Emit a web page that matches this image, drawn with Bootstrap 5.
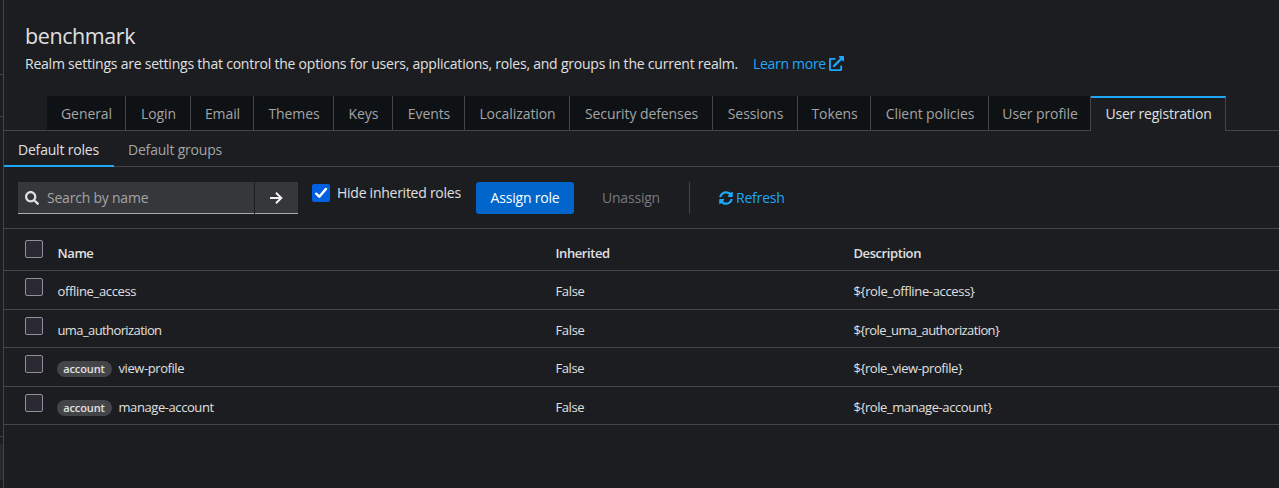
<!DOCTYPE html>
<html lang="en" data-bs-theme="dark">
<head>
<meta charset="utf-8">
<meta name="viewport" content="width=device-width, initial-scale=1">
<title>Realm settings</title>
<link href="https://cdn.jsdelivr.net/npm/bootstrap@5.3.0/dist/css/bootstrap.min.css" rel="stylesheet">
<style>
  body { background:#1b1d21; color:#e0e0e0; font-family:"Open Sans","Noto Sans",sans-serif; font-size:14px; line-height:20px; height:488px; overflow:hidden; }
  .side { width:4px; border-right:1px solid #444548; }
  .side-rule { height:1px; background:#444548; }
  .side-rule:nth-child(1) { margin-top:74px; }
  .side-rule:nth-child(2) { margin-top:41px; }
  .side-rule:nth-child(3) { margin-top:319px; }
  .side-block { height:36px; margin-top:7px; background:#26282c; }
  .accent { color:#1fa7f8; text-decoration:none; }
  .page-head { height:96px; padding:23px 21px 0; }
  .page-head h1 { font-size:21.5px; line-height:26px; font-weight:400; margin:0 0 5px; letter-spacing:-.42px; color:#e0e0e0; }
  .intro { width:728px; letter-spacing:-.222px; white-space:nowrap; }
  .learn { letter-spacing:-.3px; }
  .learn svg { margin:2px 0 0 3px; }
  .main-tabs { height:35px; padding-left:43px; border-bottom:1px solid #444548; }
  .main-tabs .nav-link { height:34px; padding:8px 0 0 1px; border:0; border-right:1px solid #444548; border-radius:0; background:#0f1214; color:#a3a4a6; text-align:center; letter-spacing:-.08px; white-space:nowrap; }
  .main-tabs .nav-link.active { height:35px; background:#1b1d21; color:#e0e0e0; border-top:2px solid #1fa7f8; padding-top:6px; letter-spacing:-.2px; }
  .w79{width:79px}.w65{width:65px}.w63{width:63px}.w80{width:80px}.w59{width:59px}.w72{width:72px}.w105{width:105px}.w143{width:143px}.w85{width:85px}.w73{width:73px}.w118{width:118px}.w102{width:102px}.w135{width:135px}
  .sub-tabs { height:36px; border-bottom:1px solid #444548; }
  .sub-tabs .nav-link { height:36px; padding:9px 0 0 14px; border-radius:0; color:#a3a4a6; width:122px; white-space:nowrap; letter-spacing:-.2px; }
  .sub-tabs .nav-link.active { width:110px; color:#e0e0e0; border-bottom:2px solid #1fa7f8; }
  .tools { height:62px; padding:15px 14px 0; border-bottom:1px solid #444548; }
  .find { width:236px; height:32px; background:#36373a; border-bottom:1px solid #aaabac; color:#a3a4a6; padding:0 7px; letter-spacing:-.22px; }
  .go { width:43px; height:32px; margin-left:1px; background:#36373a; border:0; border-bottom:1px solid #aaabac; border-radius:0; padding:0 2px 0 0; }
  .hide { margin:2px 0 0 14px; width:150px; }
  .hide span { margin:-1px 0 0 7px; letter-spacing:-.26px; white-space:nowrap; }
  .box { width:18px; height:18px; margin:0; background-color:#2b2a33; border:1px solid #8f8f9d; border-radius:2px !important; display:block; float:none; }
  .hide .box:checked { background-color:#0060df; border-color:#0060df; background-size:16px 16px; background-image:url("data:image/svg+xml,%3csvg xmlns='http://www.w3.org/2000/svg' viewBox='0 0 16 16'%3e%3cpath d='M3.200 8.700 6.300 11.700 13 3.900' fill='none' stroke='%23fff' stroke-width='2.400' stroke-linecap='round' stroke-linejoin='round'/%3e%3c/svg%3e"); }
  .assign { width:98px; height:32px; margin-left:14px; padding:0 0 2px; background:#06c; border:0; border-radius:3px; color:#fff; font-size:14px; letter-spacing:-.2px; }
  .unassign { width:86px; margin:6px 0 0 14px; text-align:center; color:#77797c; letter-spacing:-.2px; }
  .split { width:1px; height:32px; background:#444548; margin-left:15px; }
  .refresh { margin:6px 0 0 29px; letter-spacing:-.2px; gap:3px; }
  .roles { table-layout:fixed; width:1275px; margin:0; font-size:13px; letter-spacing:-.34px; border-collapse:separate; border-spacing:0; }
  .roles th, .roles td { background:none; color:#e0e0e0; padding:0; border:0; border-bottom:1px solid #444548; height:39px; vertical-align:top; line-height:18px; padding-top:11px; }
  .roles .short td { height:38px; }
  .roles thead th { height:42px; padding-top:15px; font-weight:600; letter-spacing:-.42px; }
  .roles td:first-child { padding:7px 0 0 21px !important; }
  .roles thead th:first-child { padding:11px 0 0 21px; }
  .roles .dense td { letter-spacing:-.6px; }
  .roles .dense td:nth-child(3) { letter-spacing:-.34px; }
  .roles .snug td { letter-spacing:-.42px; }
  .check-col { width:53.500px; } .name-col { width:498px; } .flag-col { width:298px; }
  .pill { display:inline-block; vertical-align:top; width:55px; height:16px; margin:2px 7px 0 -1px; padding:0; line-height:15px; font-size:11px; font-weight:600; letter-spacing:-.1px; color:#e0e0e0; background:#444548; border-radius:8px; text-align:center; }
</style>
</head>
<body class="d-flex">
  <aside class="side flex-shrink-0 d-flex flex-column">
    <div class="side-rule"></div>
    <div class="side-rule"></div>
    <div class="side-rule"></div>
    <div class="side-block"></div>
  </aside>
  <main class="flex-grow-1">
    <header class="page-head">
      <h1>benchmark</h1>
      <div class="d-flex"><span class="intro">Realm settings are settings that control the options for users, applications, roles, and groups in the current realm.</span>
        <a class="accent d-flex learn" href="#"><span>Learn more</span><svg width="15" height="15" viewBox="0 0 512 512" fill="currentColor"><path d="M432 320h-32a16 16 0 0 0-16 16v112H64V128h144a16 16 0 0 0 16-16V80a16 16 0 0 0-16-16H48a48 48 0 0 0-48 48v352a48 48 0 0 0 48 48h352a48 48 0 0 0 48-48V336a16 16 0 0 0-16-16zM488 0H360c-21.370 0-32.050 25.910-17 41l35.730 35.730L135 320.370a24 24 0 0 0 0 34L157.670 377a24 24 0 0 0 34 0l243.610-243.680L471 169c15 15 41 4.500 41-17V24a24 24 0 0 0-24-24z"/></svg></a></div>
    </header>
    <nav class="main-tabs nav flex-nowrap">
      <a class="nav-link w79" href="#">General</a><a class="nav-link w65" href="#">Login</a><a class="nav-link w63" href="#">Email</a><a class="nav-link w80" href="#">Themes</a><a class="nav-link w59" href="#">Keys</a><a class="nav-link w72" href="#">Events</a><a class="nav-link w105" href="#">Localization</a><a class="nav-link w143" href="#">Security defenses</a><a class="nav-link w85" href="#">Sessions</a><a class="nav-link w73" href="#">Tokens</a><a class="nav-link w118" href="#">Client policies</a><a class="nav-link w102" href="#">User profile</a><a class="nav-link w135 active" href="#">User registration</a>
    </nav>
    <nav class="sub-tabs nav"><a class="nav-link active" href="#">Default roles</a><a class="nav-link" href="#">Default groups</a></nav>
    <section class="tools d-flex align-items-start">
      <div class="find d-flex align-items-center"><svg class="me-2" width="14" height="14" viewBox="0 0 512 512" fill="#e0e0e0"><path d="M505 442.700L405.300 343c-4.500-4.500-10.600-7-17-7H372c27.600-35.300 44-79.700 44-128C416 93.100 322.900 0 208 0S0 93.100 0 208s93.100 208 208 208c48.300 0 92.700-16.400 128-44v16.300c0 6.400 2.500 12.500 7 17l99.700 99.700c9.400 9.400 24.600 9.400 33.900 0l28.300-28.300c9.400-9.400 9.400-24.600.1-34zM208 336c-70.700 0-128-57.200-128-128 0-70.700 57.200-128 128-128 70.700 0 128 57.200 128 128 0 70.700-57.200 128-128 128z"/></svg><span>Search by name</span></div>
      <button class="go btn d-flex align-items-center justify-content-center" aria-label="Search"><svg width="14" height="14" viewBox="0 0 14 14" fill="none" stroke="#f0f0f0" stroke-width="2"><path d="M1 7h11M7 1.700 12.300 7 7 12.300"/></svg></button>
      <label class="hide d-flex"><input class="form-check-input box flex-shrink-0" type="checkbox" checked><span>Hide inherited roles</span></label>
      <button class="assign btn">Assign role</button>
      <span class="unassign">Unassign</span>
      <span class="split"></span>
      <a class="accent d-flex align-items-center refresh" href="#"><svg width="14" height="14" viewBox="0 0 512 512" fill="currentColor"><path d="M370.720 133.280C339.458 104.008 298.888 87.962 255.848 88c-77.458.068-144.328 53.178-162.791 126.850-1.344 5.363-6.122 9.150-11.651 9.150H24.103c-7.498 0-13.194-6.807-11.807-14.176C33.933 94.924 134.813 8 256 8c66.448 0 126.791 26.136 171.315 68.685L463.030 40.970C478.149 25.851 504 36.559 504 57.941V192c0 13.255-10.745 24-24 24H345.941c-21.382 0-32.090-25.851-16.971-40.971l41.750-41.749zM32 296h134.059c21.382 0 32.090 25.851 16.971 40.971l-41.750 41.750c31.262 29.273 71.835 45.319 114.876 45.280 77.418-.070 144.315-53.144 162.787-126.849 1.344-5.363 6.122-9.150 11.651-9.150h57.304c7.498 0 13.194 6.807 11.807 14.176C478.067 417.076 377.187 504 256 504c-66.448 0-126.791-26.136-171.315-68.685L48.970 471.030C33.851 486.149 8 475.441 8 454.059V320c0-13.255 10.745-24 24-24z"/></svg><span>Refresh</span></a>
    </section>
    <table class="roles table">
      <colgroup><col class="check-col"><col class="name-col"><col class="flag-col"><col></colgroup>
      <thead><tr><th><input class="form-check-input box" type="checkbox"></th><th>Name</th><th>Inherited</th><th>Description</th></tr></thead>
      <tbody>
        <tr><td><input class="form-check-input box" type="checkbox"></td><td>offline_access</td><td>False</td><td>${role_offline-access}</td></tr>
        <tr class="short dense"><td><input class="form-check-input box" type="checkbox"></td><td>uma_authorization</td><td>False</td><td>${role_uma_authorization}</td></tr>
        <tr class="snug"><td><input class="form-check-input box" type="checkbox"></td><td><span class="pill">account</span>view-profile</td><td>False</td><td>${role_view-profile}</td></tr>
        <tr class="short snug"><td><input class="form-check-input box" type="checkbox"></td><td><span class="pill">account</span>manage-account</td><td>False</td><td>${role_manage-account}</td></tr>
      </tbody>
    </table>
  </main>
<script src="https://cdn.jsdelivr.net/npm/bootstrap@5.3.0/dist/js/bootstrap.bundle.min.js"></script>
</body>
</html>
